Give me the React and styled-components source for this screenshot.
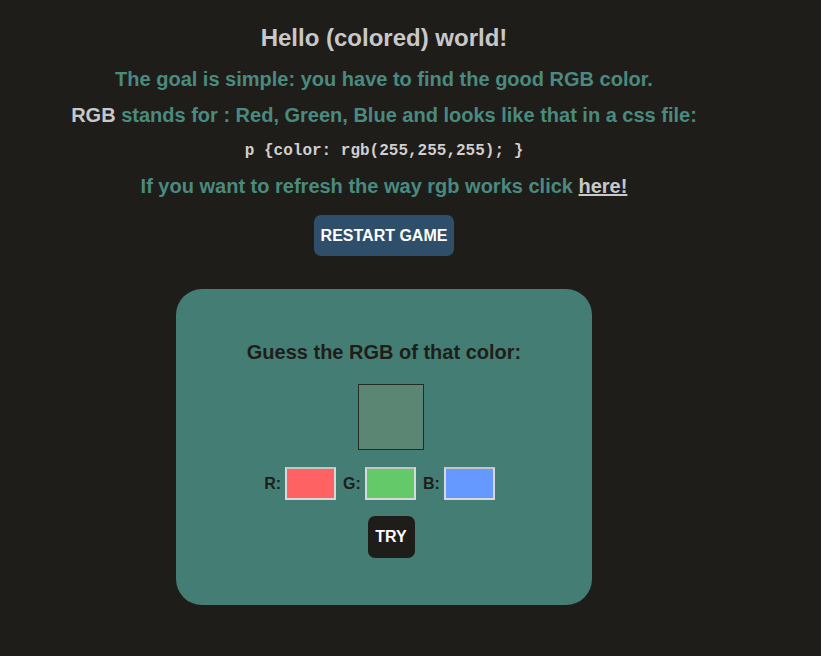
import React from "react";
import styled, { createGlobalStyle } from "styled-components";

const GlobalStyle = createGlobalStyle`
  html, body {
    margin: 0;
    padding: 0;
    background-color: #1f1d1a;
  }
  body {
    font-family: "Liberation Sans", Arial, Helvetica, sans-serif;
    min-height: 656px;
  }
`;

function App() {
  return (
    <>
      <GlobalStyle />
      <Page>
        <Title>Hello (colored) world!</Title>
        <Text>The goal is simple: you have to find the good RGB color.</Text>
        <Text>
          <Strong>RGB</Strong> stands for : Red, Green, Blue and looks like that
          in a css file:
        </Text>
        <Code>p {"{"}color: rgb(255,255,255); {"}"}</Code>
        <Text>
          If you want to refresh the way rgb works click{" "}
          <Link href="#">here!</Link>
        </Text>
        <RestartButton>RESTART GAME</RestartButton>

        <Card>
          <CardTitle>Guess the RGB of that color:</CardTitle>
          <Swatch color="#5c8674" />
          <InputRow>
            <Field>
              <Label>R:</Label>
              <ColorInput fill="#ff6262" />
            </Field>
            <Field>
              <Label>G:</Label>
              <ColorInput fill="#64c969" />
            </Field>
            <Field>
              <Label>B:</Label>
              <ColorInput fill="#6699ff" />
            </Field>
          </InputRow>
          <TryButton>TRY</TryButton>
        </Card>
      </Page>
    </>
  );
}

export default App;

const Page = styled.div`
  width: 768px;
  display: flex;
  flex-direction: column;
  align-items: center;
  text-align: center;
  padding-top: 25px;
`;

const Title = styled.h1`
  margin: 0 0 17px;
  font-size: 24px;
  line-height: 26px;
  font-weight: bold;
  color: #c8c8c8;
`;

const Text = styled.p`
  margin: 0 0 14px;
  font-size: 20px;
  line-height: 22px;
  font-weight: bold;
  color: #4a8a7f;
`;

const Strong = styled.span`
  color: #c8c8c8;
`;

const Code = styled.p`
  margin: 0 0 13px;
  font-family: "Liberation Mono", "Courier New", monospace;
  font-size: 16px;
  line-height: 22px;
  font-weight: bold;
  color: #cfcfcf;
`;

const Link = styled.a`
  color: #c8c8c8;
  text-decoration: underline;
`;

const RestartButton = styled.button`
  margin-top: 4px;
  width: 140px;
  height: 41px;
  border: none;
  border-radius: 7px;
  background-color: #2f4e69;
  color: #ffffff;
  font-family: "Liberation Sans", Arial, sans-serif;
  font-size: 16px;
  font-weight: bold;
  cursor: pointer;
`;

const Card = styled.div`
  margin-top: 33px;
  width: 416px;
  height: 316px;
  box-sizing: border-box;
  padding-top: 52px;
  border-radius: 26px;
  background-color: #447d74;
  display: flex;
  flex-direction: column;
  align-items: center;
`;

const CardTitle = styled.h2`
  margin: 0 0 21px;
  font-size: 20px;
  line-height: 22px;
  font-weight: bold;
  color: #1f1d1a;
`;

const Swatch = styled.div`
  width: 64px;
  height: 64px;
  margin-left: 14px;
  border: 1px solid #262a26;
  background-color: ${(p) => p.color};
`;

const InputRow = styled.div`
  margin-top: 17px;
  margin-right: 9px;
  display: flex;
  align-items: center;
  gap: 7px;
`;

const Field = styled.label`
  display: flex;
  align-items: center;
  gap: 4px;
`;

const Label = styled.span`
  font-size: 16px;
  font-weight: bold;
  color: #1f1d1a;
`;

const ColorInput = styled.input`
  width: 51px;
  height: 33px;
  box-sizing: border-box;
  border: 2px solid #d8d8d8;
  border-top-color: #c4c4c4;
  background-color: ${(p) => p.fill};
  padding: 0;
  outline: none;
`;

const TryButton = styled.button`
  margin-top: 16px;
  margin-left: 14px;
  width: 47px;
  height: 42px;
  border: none;
  border-radius: 7px;
  background-color: #1f1d1a;
  color: #ffffff;
  font-family: "Liberation Sans", Arial, sans-serif;
  font-size: 16px;
  font-weight: bold;
  cursor: pointer;
`;
